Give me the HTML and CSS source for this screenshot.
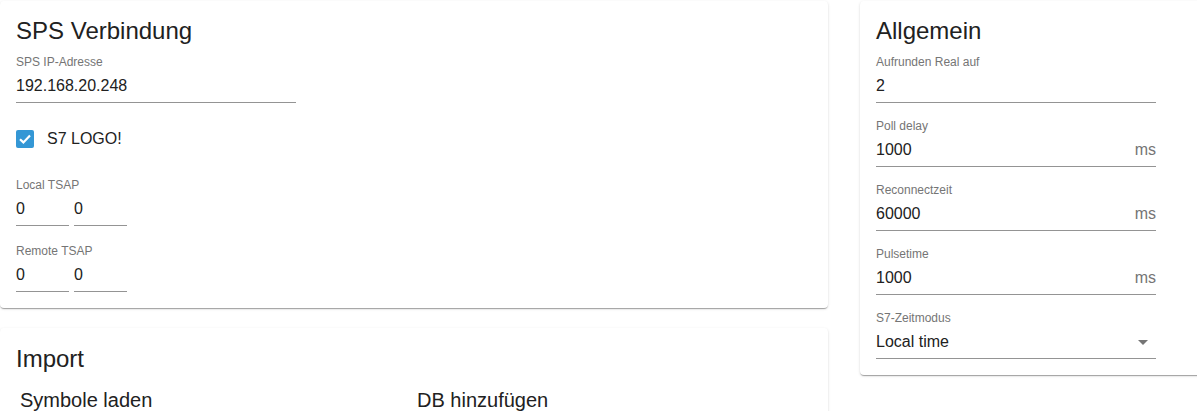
FILE: index.html
```html
<!DOCTYPE html>
<html lang="de">
<head>
    <meta charset="UTF-8">
    <title>Einstellungen</title>
    <link rel="stylesheet" href="styles.css">
</head>
<body>

<div class="page">
    <div class="column">
        <div class="card">
            <h2 class="card-title">SPS Verbindung</h2>

            <div class="field wide">
                <label>SPS IP-Adresse</label>
                <div class="field-row">
                    <input type="text" value="192.168.20.248">
                </div>
            </div>

            <div class="check-row">
                <span class="checkbox">
                    <svg width="18" height="18" viewBox="0 0 18 18">
                        <path d="M4 9.2 L7.4 12.4 L14 5.6" fill="none" stroke="#fff" stroke-width="2.2"/>
                    </svg>
                </span>
                <span class="check-label">S7 LOGO!</span>
            </div>

            <div class="field tsap first">
                <label>Local TSAP</label>
                <div class="pair">
                    <div class="field-row small"><input type="text" value="0"></div>
                    <div class="field-row small"><input type="text" value="0"></div>
                </div>
            </div>

            <div class="field tsap">
                <label>Remote TSAP</label>
                <div class="pair">
                    <div class="field-row small"><input type="text" value="0"></div>
                    <div class="field-row small"><input type="text" value="0"></div>
                </div>
            </div>
        </div>

        <div class="card import">
            <h2 class="card-title">Import</h2>
            <div class="import-cols">
                <h3>Symbole laden</h3>
                <h3>DB hinzufügen</h3>
            </div>
        </div>
    </div>

    <div class="column">
        <div class="card general">
            <h2 class="card-title">Allgemein</h2>

            <div class="field wide">
                <label>Aufrunden Real auf</label>
                <div class="field-row"><input type="text" value="2"></div>
            </div>

            <div class="field wide">
                <label>Poll delay</label>
                <div class="field-row"><input type="text" value="1000"><span class="suffix">ms</span></div>
            </div>

            <div class="field wide">
                <label>Reconnectzeit</label>
                <div class="field-row"><input type="text" value="60000"><span class="suffix">ms</span></div>
            </div>

            <div class="field wide">
                <label>Pulsetime</label>
                <div class="field-row"><input type="text" value="1000"><span class="suffix">ms</span></div>
            </div>

            <div class="field wide last">
                <label>S7-Zeitmodus</label>
                <div class="field-row select">
                    <span class="select-value">Local time</span>
                    <span class="arrow"></span>
                </div>
            </div>
        </div>
    </div>
</div>

</body>
</html>
```

FILE: styles.css
```css
body {
    margin: 0;
    background: #fff;
    font-family: Arial, "Liberation Sans", sans-serif;
    color: #212121;
    overflow: hidden;
}
.page {
    display: grid;
    grid-template-columns: 828px 345px;
    column-gap: 32px;
    align-items: start;
    padding-top: 1px;
}
.card {
    background: #fff;
    border-radius: 4px;
    box-shadow: 0 2px 1px -1px rgba(0, 0, 0, .2), 0 1px 1px 0 rgba(0, 0, 0, .14), 0 1px 3px 0 rgba(0, 0, 0, .12);
    padding: 16px 16px 16px;
}
.card-title {
    margin: 0 0 10px;
    font-family: Arial, "Liberation Sans", sans-serif;
    font-size: 24px;
    line-height: 28px;
    font-weight: normal;
}
.field {
    margin-bottom: 16px;
}
.field label {
    display: block;
    font-size: 12px;
    line-height: 14px;
    color: #757575;
    margin-bottom: 7px;
}
.field-row {
    display: flex;
    align-items: center;
    border-bottom: 1px solid #949494;
    padding-bottom: 6px;
}
.wide .field-row {
    width: 280px;
}
.field-row input {
    flex: 1;
    min-width: 0;
    border: none;
    padding: 0;
    margin: 0;
    outline: none;
    background: transparent;
    font-family: Arial, "Liberation Sans", sans-serif;
    font-size: 16px;
    line-height: 20px;
    height: 20px;
    color: #212121;
}
.suffix {
    font-size: 16px;
    line-height: 20px;
    color: #757575;
}
.check-row {
    display: flex;
    align-items: center;
    gap: 13px;
    margin-top: 27px;
    height: 18px;
}
.checkbox {
    width: 18px;
    height: 18px;
    border-radius: 2px;
    background: #3497d5;
    display: block;
}
.checkbox svg {
    display: block;
}
.check-label {
    font-size: 16px;
    line-height: 20px;
}
.tsap.first {
    margin-top: 30px;
}
.tsap {
    margin-bottom: 0;
}
.tsap + .tsap {
    margin-top: 18px;
}
.pair {
    display: flex;
    gap: 5px;
}
.field-row.small {
    width: 53px;
}
.import {
    margin-top: 20px;
    padding-top: 17px;
    height: 120px;
}
.import .card-title {
    margin-bottom: 15px;
}
.import-cols {
    display: grid;
    grid-template-columns: 397px 1fr;
    padding-left: 4px;
}
.import-cols h3 {
    margin: 0;
    font-size: 20px;
    line-height: 24px;
    font-weight: normal;
}
.general {
    padding-bottom: 1px;
}
.field.last {
    margin-bottom: 15px;
}
.select-value {
    flex: 1;
    font-size: 16px;
    line-height: 20px;
}
.arrow {
    width: 0;
    height: 0;
    border-left: 5px solid transparent;
    border-right: 5px solid transparent;
    border-top: 5px solid #757575;
    margin-right: 8px;
}
```
